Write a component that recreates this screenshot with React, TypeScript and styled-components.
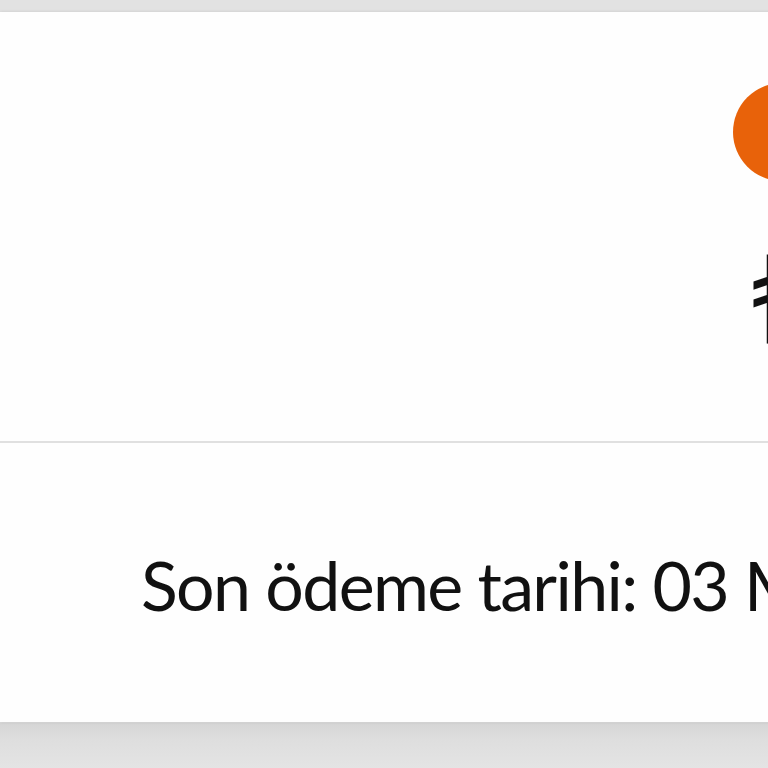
import React from "react";
import styled, { createGlobalStyle } from "styled-components";

const GlobalStyle = createGlobalStyle`
    html, body {
        margin: 0;
        padding: 0;
        background: #e2e2e2;
        overflow: hidden;
        font-family: "Noto Sans", "Open Sans", sans-serif;
    }
`

type Bill = {
    amount: string
    dueDate: string
}

const bill: Bill = {
    amount: "₺245,90",
    dueDate: "03 Mart 2024"
}

const App = (): JSX.Element => {
    return (
        <>
            <GlobalStyle />
            <Page>
                <Card>
                    <TopSection>
                        <Badge />
                        <Amount>{bill.amount}</Amount>
                    </TopSection>
                    <Divider />
                    <BottomSection>
                        <DueText>Son ödeme tarihi: {bill.dueDate}</DueText>
                    </BottomSection>
                </Card>
            </Page>
        </>
    )
}

export default App

const Page = styled.div`
    width: 768px;
    height: 768px;
    padding-top: 12px;
    box-sizing: border-box;
    background: linear-gradient(#e2e2e2 0px, #e2e2e2 722px, #d6d6d6 723px, #dedede 740px, #e4e4e4 768px);
`
const Card = styled.div`
    width: 1500px;
    height: 710px;
    background: #fefefe;
    display: flex;
    flex-direction: column;
    box-shadow: 0 0 3px rgba(0, 0, 0, 0.12);
`
const TopSection = styled.div`
    height: 429px;
    display: flex;
    flex-direction: column;
    align-items: flex-start;
    padding-left: 733px;
    padding-top: 71px;
    box-sizing: border-box;
`
const Badge = styled.div`
    width: 98px;
    height: 98px;
    border-radius: 50%;
    background: #e8620a;
`
const Amount = styled.div`
    margin-top: 52px;
    margin-left: 18px;
    font-size: 124px;
    line-height: 1;
    color: #111;
    white-space: nowrap;
`
const Divider = styled.div`
    height: 2px;
    background: #e0e0e0;
`
const BottomSection = styled.div`
    flex: 1;
    display: flex;
    align-items: center;
    padding-left: 141px;
`
const DueText = styled.div`
    font-family: Lato, "Noto Sans", sans-serif;
    font-size: 68px;
    letter-spacing: -1.6px;
    color: #111;
    white-space: nowrap;
    margin-top: 4px;
`
